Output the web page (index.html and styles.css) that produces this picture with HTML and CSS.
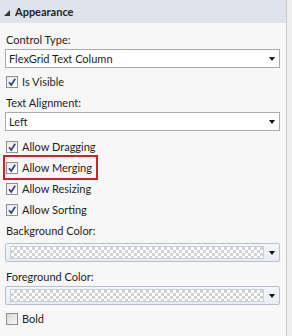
FILE: index.html
```html
<!DOCTYPE html>
<html lang="en">
<head>
    <meta charset="UTF-8">
    <title>Appearance</title>

    <link rel="stylesheet" href="styles.css">

</head>
<body>
  <div id="panel">
    <div id="props">
      <header>
        <svg class="expander" width="6" height="6" viewBox="0 0 6 6"><polygon points="6,0 6,6 0,6" fill="#333"/></svg>
        <span>Appearance</span>
      </header>

      <div class="group">
        <div class="label first">Control Type:</div>
        <div class="combo"><span>FlexGrid Text Column</span><i class="arrow"></i></div>

        <div class="check on gap_top">
          <span class="box"><svg width="10" height="10" viewBox="0 0 10 10"><path d="M2 5.2 L4.2 8 L8.2 1.8" fill="none" stroke="#2d3b8c" stroke-width="1.6"/></svg></span>
          Is Visible
        </div>

        <div class="label">Text Alignment:</div>
        <div class="combo"><span>Left</span><i class="arrow"></i></div>

        <div class="check on gap_big">
          <span class="box"><svg width="10" height="10" viewBox="0 0 10 10"><path d="M2 5.2 L4.2 8 L8.2 1.8" fill="none" stroke="#2d3b8c" stroke-width="1.6"/></svg></span>
          Allow Dragging
        </div>
        <div class="check on marked">
          <span class="box"><svg width="10" height="10" viewBox="0 0 10 10"><path d="M2 5.2 L4.2 8 L8.2 1.8" fill="none" stroke="#2d3b8c" stroke-width="1.6"/></svg></span>
          Allow Merging
        </div>
        <div class="check on">
          <span class="box"><svg width="10" height="10" viewBox="0 0 10 10"><path d="M2 5.2 L4.2 8 L8.2 1.8" fill="none" stroke="#2d3b8c" stroke-width="1.6"/></svg></span>
          Allow Resizing
        </div>
        <div class="check on">
          <span class="box"><svg width="10" height="10" viewBox="0 0 10 10"><path d="M2 5.2 L4.2 8 L8.2 1.8" fill="none" stroke="#2d3b8c" stroke-width="1.6"/></svg></span>
          Allow Sorting
        </div>

        <div class="label">Background Color:</div>
        <div class="combo color bg_color"><span class="swatch"></span><i class="arrow"></i></div>

        <div class="label after_color">Foreground Color:</div>
        <div class="combo color"><span class="swatch"></span><i class="arrow"></i></div>

        <div class="check bold_row">
          <span class="box"></span>
          Bold
        </div>
      </div>
    </div>
    <div id="scroll_edge"></div>
  </div>
</body>
</html>
```

FILE: styles.css
```css
body {
  margin: 0;
  width: 292px;
  height: 336px;
  overflow: hidden;
  background: #f7f7f7;

  font-family: Lato, "Open Sans", sans-serif;
  font-size: 11px;
  color: #1e1e1e;
}

#panel {
  display: flex;
  height: 336px;
}

#props {
  flex: 1;
}

#scroll_edge {
  width: 5px;
  border-left: 1px solid #c9c9c9;
  background: #efefef;
}

header {
  display: flex;
  align-items: center;
  gap: 5px;
  height: 23px;
  padding-left: 4px;
  background: #dee3ec;
  font-weight: bold;
  font-size: 11px;
}

header .expander {
  margin-top: 2px;
}

.group {
  display: flex;
  flex-direction: column;
  align-items: flex-start;
  padding: 0 6px 0 5px;
}

.label {
  line-height: 16px;
  margin-top: 3px;
  padding-left: 1px;
}

.label.first {
  margin-top: 9px;
}

.label.after_color {
  margin-top: 7px;
}

.combo {
  box-sizing: border-box;
  align-self: stretch;
  display: flex;
  align-items: center;
  justify-content: space-between;
  height: 19px;
  margin-top: 1px;
  padding: 0 4px 0 3px;
  background: #fff;
  border: 1px solid #a9abb2;
}

.arrow {
  width: 0;
  height: 0;
  border-left: 3.5px solid transparent;
  border-right: 3.5px solid transparent;
  border-top: 4px solid #111;
  margin-top: 1px;
}

.combo.color {
  border-color: #b7c0cc;
  border-radius: 2px;
  padding: 0 4px 0 4px;
  background: linear-gradient(#f4f6f9, #e9edf2);
}

.combo.bg_color {
  margin-top: 4px;
}

.swatch {
  flex: 1;
  height: 11px;
  margin-right: 5px;
  border: 1px solid #c6cfdb;
  background: conic-gradient(#d3d3d3 25%, #ffffff 0 50%, #d3d3d3 0 75%, #ffffff 0) 0 0 / 6px 6px;
}

.check {
  display: flex;
  align-items: center;
  gap: 4px;
  height: 21px;
  padding: 0 4px 0 1px;
}

.check.gap_top {
  margin-top: 3px;
}

.check.gap_big {
  margin-top: 5px;
}

.check.bold_row {
  margin-top: 3px;
}

.check.marked {
  outline: 2px solid #c3262f;
  outline-offset: 0;
}

.box {
  box-sizing: border-box;
  display: flex;
  align-items: center;
  justify-content: center;
  width: 12px;
  height: 12px;
  border: 1px solid #8e8f8f;
  background: linear-gradient(135deg, #d9d9d9, #f6f6f6);
}

.check.on .box {
  background: linear-gradient(135deg, #e9e9ef, #ffffff);
}
```
